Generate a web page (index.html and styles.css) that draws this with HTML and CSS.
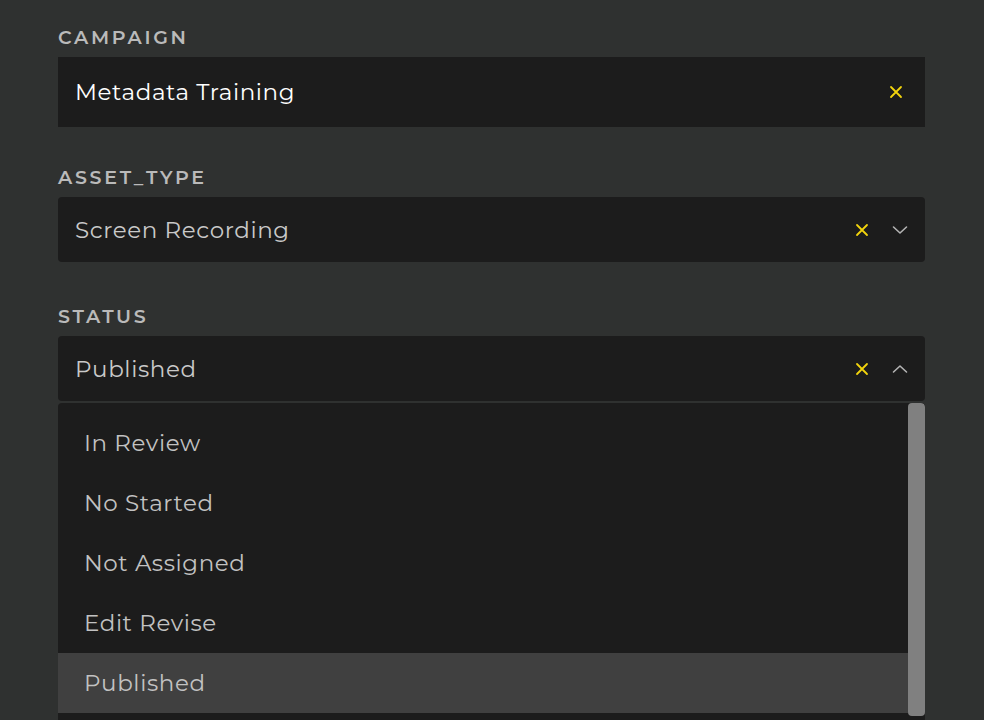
FILE: index.html
```html
<!DOCTYPE html>
<html lang="en">
<head>
    <meta charset="UTF-8">
    <title>Asset metadata</title>
    <link rel="stylesheet" href="styles.css">
</head>
<body>
    <div class="form">
        <div class="field field-campaign">
            <div class="field-label">Campaign</div>
            <div class="text-input">
                <span class="value value-bright">Metadata Training</span>
                <span class="clear-icon">
                    <svg width="14" height="14" viewBox="0 0 14 14"><path d="M2 2L12 12M12 2L2 12" stroke="#f2d40d" stroke-width="1.8" stroke-linecap="round"/></svg>
                </span>
            </div>
        </div>

        <div class="field field-type">
            <div class="field-label">Asset_Type</div>
            <div class="select">
                <span class="value">Screen Recording</span>
                <span class="clear-icon">
                    <svg width="14" height="14" viewBox="0 0 14 14"><path d="M2 2L12 12M12 2L2 12" stroke="#f2d40d" stroke-width="1.8" stroke-linecap="round"/></svg>
                </span>
                <span class="chevron">
                    <svg width="16" height="10" viewBox="0 0 16 10"><path d="M1.5 2L8 8L14.5 2" fill="none" stroke="#b4b4b4" stroke-width="1.6" stroke-linecap="round" stroke-linejoin="round"/></svg>
                </span>
            </div>
        </div>

        <div class="field field-status">
            <div class="field-label">Status</div>
            <div class="select open">
                <span class="value">Published</span>
                <span class="clear-icon">
                    <svg width="14" height="14" viewBox="0 0 14 14"><path d="M2 2L12 12M12 2L2 12" stroke="#f2d40d" stroke-width="1.8" stroke-linecap="round"/></svg>
                </span>
                <span class="chevron">
                    <svg width="16" height="10" viewBox="0 0 16 10"><path d="M1.5 8L8 2L14.5 8" fill="none" stroke="#b4b4b4" stroke-width="1.6" stroke-linecap="round" stroke-linejoin="round"/></svg>
                </span>
            </div>
            <div class="menu">
                <ul class="menu-list">
                    <li class="menu-item">In Review</li>
                    <li class="menu-item">No Started</li>
                    <li class="menu-item">Not Assigned</li>
                    <li class="menu-item">Edit Revise</li>
                    <li class="menu-item selected">Published</li>
                </ul>
                <div class="scrollbar"><div class="thumb"></div></div>
            </div>
        </div>
    </div>
</body>
</html>
```

FILE: styles.css
```css
body {
    margin: 0;
    background-color: #2f3130;
    font-family: "Montserrat", "Open Sans", "DejaVu Sans", sans-serif;
    overflow: hidden;
}
.form {
    padding: 26px 59px 0 58px;
}
.field-label {
    font-size: 19px;
    line-height: 24px;
    font-weight: 600;
    letter-spacing: 2.7px;
    text-transform: uppercase;
    color: #bababa;
    margin-bottom: 7px;
}
.field-campaign {
    margin-bottom: 39px;
}
.field-type {
    margin-bottom: 43px;
}
.text-input, .select {
    display: flex;
    align-items: center;
    background-color: #1c1c1c;
    padding: 0 22px 0 17px;
}
.text-input {
    height: 70px;
}
.select {
    height: 65px;
    border-radius: 4px;
    padding-right: 17px;
}
.value {
    flex: 1;
    font-size: 23px;
    letter-spacing: 0.6px;
    color: #c9c9c9;
}
.value-bright {
    color: #ffffff;
}
.clear-icon {
    display: flex;
    align-items: center;
}
.chevron {
    display: flex;
    align-items: center;
    margin-left: 23px;
}
.menu {
    display: flex;
    margin-top: 2px;
    background-color: #1c1c1c;
    height: 330px;
    border-radius: 4px 4px 0 0;
    overflow: hidden;
}
.menu-list {
    flex: 1;
    list-style: none;
    margin: 0;
    padding: 10px 0 0 0;
}
.menu-item {
    height: 60px;
    line-height: 60px;
    padding-left: 26px;
    font-size: 23px;
    letter-spacing: 0.6px;
    color: #c2c2c2;
}
.menu-item.selected {
    background-color: #404040;
}
.scrollbar {
    width: 17px;
}
.thumb {
    height: 313px;
    background-color: #808080;
    border-radius: 4px;
}
```
